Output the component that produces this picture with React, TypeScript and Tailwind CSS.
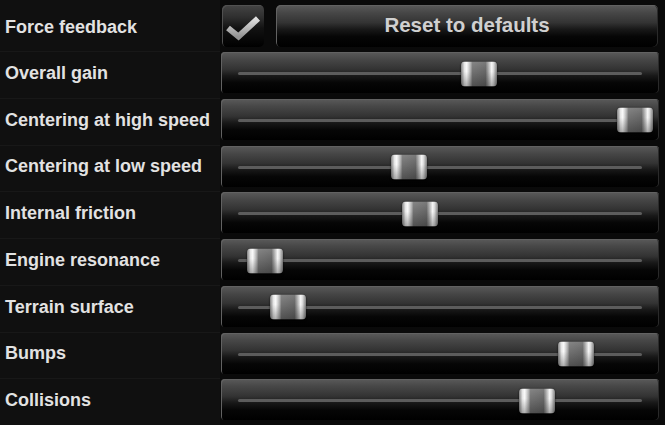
import type { CSSProperties } from 'react'

interface SliderRow {
  label: string
  // thumb centre, in px from the left end of the track
  pos: number
}

const rows: SliderRow[] = [
  { label: 'Overall gain', pos: 241 },
  { label: 'Centering at high speed', pos: 397 },
  { label: 'Centering at low speed', pos: 171 },
  { label: 'Internal friction', pos: 182 },
  { label: 'Engine resonance', pos: 27 },
  { label: 'Terrain surface', pos: 50 },
  { label: 'Bumps', pos: 338 },
  { label: 'Collisions', pos: 299 },
]

const glossy =
  'bg-[linear-gradient(180deg,#5a5a5a_0%,#474747_18%,#333_42%,#181818_58%,#060606_75%,#000_100%)] shadow-[inset_1px_1px_0_#626262,inset_-1px_0_0_#2a2a2a]'

function Label({ text, first }: { text: string; first?: boolean }) {
  return (
    <div
      className={
        'flex items-center bg-[#101010] pl-[5px] text-[18px] font-bold text-[#e2e2e2] ' +
        (first ? 'pt-[3px]' : 'border-t border-[#181818] pb-[3px]')
      }
    >
      {text}
    </div>
  )
}

function Thumb({ pos }: { pos: number }) {
  const style: CSSProperties = { left: pos - 18 }
  return (
    <div
      style={style}
      className="absolute top-1/2 h-[25px] w-[36px] -translate-y-1/2 rounded-[4px] bg-[linear-gradient(180deg,rgba(255,255,255,0.14)_0%,rgba(0,0,0,0)_40%,rgba(0,0,0,0.3)_100%),linear-gradient(90deg,#7a7a7a_0%,#e8e8e8_10%,#fafafa_16%,#b0b0b0_26%,#727272_32%,#666_68%,#a8a8a8_76%,#f6f6f6_85%,#dcdcdc_90%,#787878_100%)] shadow-[0_1px_2px_rgba(0,0,0,0.8)]"
    />
  )
}

function Slider({ pos }: { pos: number }) {
  return (
    <div className={'mt-[1px] flex h-[41px] items-center rounded-[4px] px-[17px] ' + glossy}>
      <div className="relative h-[3px] w-full translate-y-[1px] rounded-full bg-[#5c5c5c]">
        <Thumb pos={pos} />
      </div>
    </div>
  )
}

function CheckBox() {
  return (
    <div className="flex h-[42px] w-[42px] items-center justify-center rounded-[5px] bg-[linear-gradient(180deg,#444_0%,#2e2e2e_30%,#121212_55%,#000_100%)] shadow-[inset_1px_1px_0_#505050]">
      <svg width="42" height="42" viewBox="0 0 42 42">
        <defs>
          <linearGradient id="chk" x1="0" y1="0" x2="0" y2="1">
            <stop offset="0" stopColor="#e0e0e0" />
            <stop offset="1" stopColor="#949494" />
          </linearGradient>
        </defs>
        <polyline
          points="6,23 16.5,31.5 36,13.5"
          fill="none"
          stroke="url(#chk)"
          strokeWidth="6"
          strokeLinejoin="miter"
        />
      </svg>
    </div>
  )
}

export default function App() {
  return (
    <div
      className="grid h-[425px] w-[665px] grid-cols-[220px_1fr] grid-rows-[51px_repeat(8,1fr)] overflow-hidden bg-[#0a0a0a]"
      style={{ fontFamily: '"Liberation Sans", Arial, sans-serif' }}
    >
      <Label text="Force feedback" first />
      <div className="flex items-start gap-[12px] pt-[5px] pl-[2px] pr-[7px]">
        <CheckBox />
        <button
          className={
            'flex h-[42px] flex-1 items-center justify-center rounded-[5px] pb-[1px] text-[20.5px] font-bold text-[#d0d0d0] ' +
            glossy
          }
        >
          Reset to defaults
        </button>
      </div>
      {rows.map((r) => (
        <div key={r.label} className="contents">
          <Label text={r.label} />
          <div className="pl-[1px] pr-[6px]">
            <Slider pos={r.pos} />
          </div>
        </div>
      ))}
    </div>
  )
}
